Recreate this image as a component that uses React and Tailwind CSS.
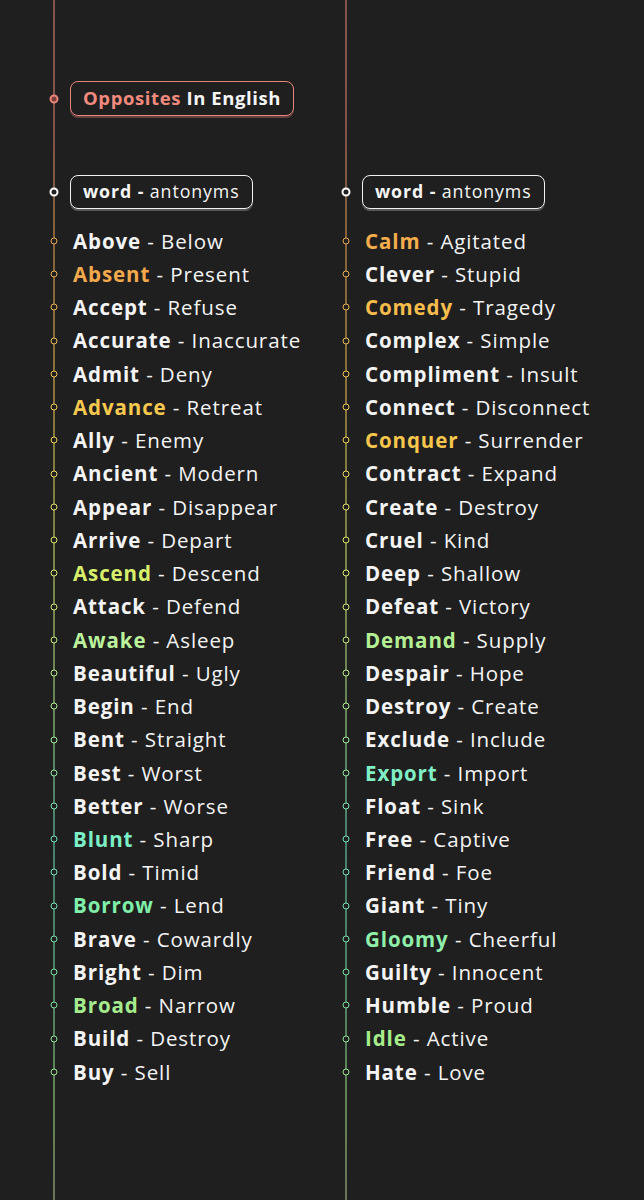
const stops = [
  [0, [232, 133, 122]],
  [150, [222, 136, 112]],
  [240, [235, 165, 80]],
  [400, [240, 200, 85]],
  [570, [215, 235, 110]],
  [720, [170, 235, 150]],
  [840, [110, 225, 190]],
  [1000, [125, 225, 160]],
  [1100, [165, 230, 135]],
  [1200, [175, 200, 150]],
]

function colorAt(y) {
  for (let i = 0; i < stops.length - 1; i++) {
    const [y0, c0] = stops[i]
    const [y1, c1] = stops[i + 1]
    if (y >= y0 && y <= y1) {
      const t = (y - y0) / (y1 - y0)
      const c = c0.map((v, k) => Math.round(v + (c1[k] - v) * t))
      return `rgb(${c[0]},${c[1]},${c[2]})`
    }
  }
  return 'rgb(175,200,150)'
}

const left = [
  ['Above', 'Below'],
  ['Absent', 'Present', '#f4aa4c'],
  ['Accept', 'Refuse'],
  ['Accurate', 'Inaccurate'],
  ['Admit', 'Deny'],
  ['Advance', 'Retreat', '#f6c94e'],
  ['Ally', 'Enemy'],
  ['Ancient', 'Modern'],
  ['Appear', 'Disappear'],
  ['Arrive', 'Depart'],
  ['Ascend', 'Descend', '#d8ef6c'],
  ['Attack', 'Defend'],
  ['Awake', 'Asleep', '#bdf29c'],
  ['Beautiful', 'Ugly'],
  ['Begin', 'End'],
  ['Bent', 'Straight'],
  ['Best', 'Worst'],
  ['Better', 'Worse'],
  ['Blunt', 'Sharp', '#7cefc6'],
  ['Bold', 'Timid'],
  ['Borrow', 'Lend', '#80efaa'],
  ['Brave', 'Cowardly'],
  ['Bright', 'Dim'],
  ['Broad', 'Narrow', '#a6ec8e'],
  ['Build', 'Destroy'],
  ['Buy', 'Sell'],
]

const right = [
  ['Calm', 'Agitated', '#f4ad4c'],
  ['Clever', 'Stupid'],
  ['Comedy', 'Tragedy', '#f7bd4c'],
  ['Complex', 'Simple'],
  ['Compliment', 'Insult'],
  ['Connect', 'Disconnect'],
  ['Conquer', 'Surrender', '#f7c64c'],
  ['Contract', 'Expand'],
  ['Create', 'Destroy'],
  ['Cruel', 'Kind'],
  ['Deep', 'Shallow'],
  ['Defeat', 'Victory'],
  ['Demand', 'Supply', '#b4ef94'],
  ['Despair', 'Hope'],
  ['Destroy', 'Create'],
  ['Exclude', 'Include'],
  ['Export', 'Import', '#80efc6'],
  ['Float', 'Sink'],
  ['Free', 'Captive'],
  ['Friend', 'Foe'],
  ['Giant', 'Tiny'],
  ['Gloomy', 'Cheerful', '#90efaa'],
  ['Guilty', 'Innocent'],
  ['Humble', 'Proud'],
  ['Idle', 'Active', '#a6ec8a'],
  ['Hate', 'Love'],
]

function Line() {
  return (
    <div className="absolute left-0 top-0 bottom-0 w-px -translate-x-1/2 bg-[linear-gradient(to_bottom,#e8857a_0%,#de8870_12%,#eba550_20%,#f0c855_33%,#d7eb6e_47%,#aaeb96_60%,#6ee1be_70%,#7de1a0_83%,#a5e687_92%,#afc896_100%)]" />
  )
}

function HeaderPill() {
  return (
    <div className="relative flex items-center h-[34px]">
      <span className="absolute left-0 top-1/2 -translate-x-1/2 -translate-y-1/2 w-[9px] h-[9px] rounded-full border-2 border-white bg-[#1f1f1f]" />
      <div className="ml-[16px] h-[34px] flex items-center px-[12px] rounded-[8px] border-[1.5px] border-[#f2f2f2] shadow-[0_2px_0_rgba(255,255,255,0.25)] text-[17.8px] tracking-[0.9px] text-[#f5f5f5] leading-none">
        <span className="font-bold">word -</span>
        <span className="font-normal">&nbsp;antonyms</span>
      </div>
    </div>
  )
}

function Rows({ items, top }) {
  return (
    <div className="flex flex-col">
      {items.map(([w, a, c], i) => (
        <div key={w + i} className="relative h-[33.24px] flex items-center pl-[19px] text-[20.5px] tracking-[0.9px] leading-none text-[#f4f4f4] whitespace-nowrap">
          <span
            className="absolute left-0 top-1/2 -translate-x-1/2 -translate-y-1/2 w-[7px] h-[7px] rounded-full border-[1.5px] bg-[#1f1f1f]"
            style={{ borderColor: colorAt(top + i * 33.24) }}
          />
          <span className="font-bold" style={c ? { color: c } : undefined}>{w}</span>
          <span className="font-normal">&nbsp;- {a}</span>
        </div>
      ))}
    </div>
  )
}

export default function App() {
  return (
    <div className="w-[644px] h-[1200px] bg-[#1f1f1f] flex pl-[54px] overflow-hidden font-['Open_Sans',Lato,sans-serif]">
      {/* left column */}
      <div className="relative w-[292px] h-full flex flex-col pt-[81px]">
        <Line />
        <div className="relative flex items-center h-[35px]">
          <span className="absolute left-0 top-1/2 -translate-x-1/2 -translate-y-1/2 w-[9px] h-[9px] rounded-full border-2 border-[#e8857a] bg-[#7a3f3a]" />
          <div className="ml-[16px] h-[35px] flex items-center px-[12px] rounded-[8px] border-[1.5px] border-[#e8857a] shadow-[0_2px_0_rgba(232,133,122,0.35)] text-[18.5px] tracking-[0.6px] font-bold leading-none">
            <span className="text-[#f08a7e]">Opposites</span>
            <span className="text-[#f5f5f5]">&nbsp;In English</span>
          </div>
        </div>
        <div className="mt-[59px]">
          <HeaderPill />
        </div>
        <div className="mt-[15.4px]">
          <Rows items={left} top={241} />
        </div>
      </div>

      {/* right column */}
      <div className="relative flex-1 h-full flex flex-col pt-[175px]">
        <Line />
        <HeaderPill />
        <div className="mt-[15.4px]">
          <Rows items={right} top={241} />
        </div>
      </div>
    </div>
  )
}
